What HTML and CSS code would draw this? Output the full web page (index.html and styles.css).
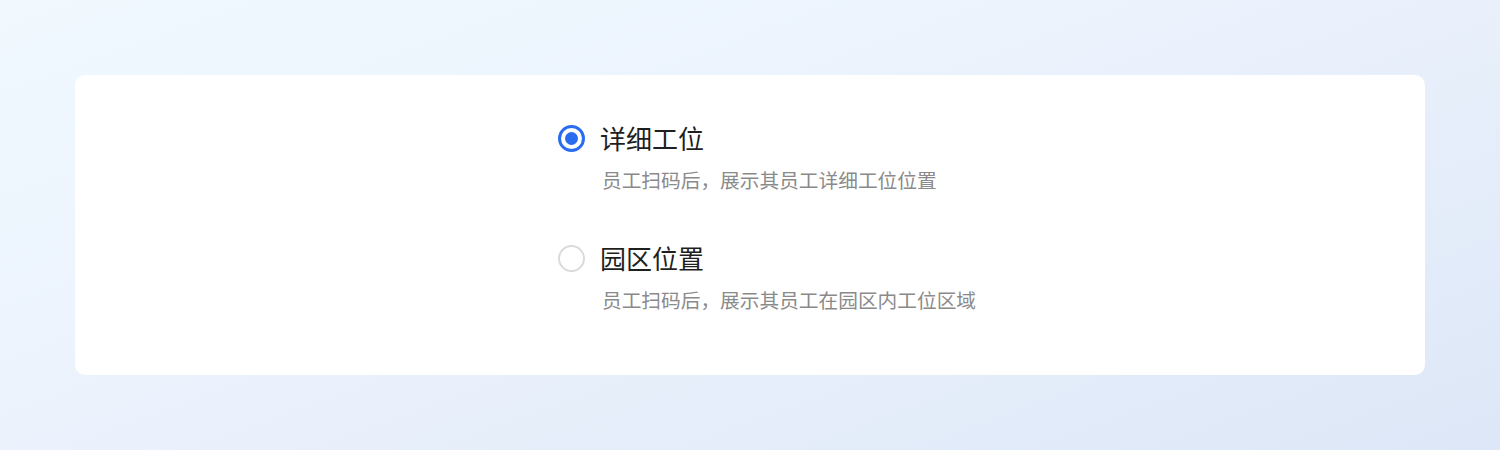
FILE: index.html
```html
<!DOCTYPE html>
<html lang="zh">
<head>
<meta charset="utf-8">
<link rel="stylesheet" href="styles.css">
</head>
<body>
<div class="page">
  <div class="card">
    <div class="options">
      <div class="option">
        <div class="head">
          <span class="radio checked"></span>
          <span class="title">详细工位</span>
        </div>
        <div class="desc">员工扫码后，展示其员工详细工位位置</div>
      </div>
      <div class="option">
        <div class="head">
          <span class="radio"></span>
          <span class="title">园区位置</span>
        </div>
        <div class="desc">员工扫码后，展示其员工在园区内工位区域</div>
      </div>
    </div>
  </div>
</div>
</body>
</html>
```

FILE: styles.css
```css
html, body {
  margin: 0;
  padding: 0;
}
body {
  font-family: "Noto Sans CJK SC", "Noto Sans", sans-serif;
}
.page {
  width: 1500px;
  height: 450px;
  box-sizing: border-box;
  padding: 75px;
  background: linear-gradient(160deg, #f1f9ff 0%, #eaf1fc 50%, #dde7f7 100%);
}
.card {
  height: 300px;
  background: #ffffff;
  border-radius: 10px;
  box-sizing: border-box;
  padding: 40px 0 0 483px;
}
.options {
  display: flex;
  flex-direction: column;
  gap: 41px;
}
.option {
  display: flex;
  flex-direction: column;
}
.head {
  display: flex;
  align-items: center;
  gap: 15px;
  height: 46px;
}
.radio {
  width: 27px;
  height: 27px;
  box-sizing: border-box;
  border-radius: 50%;
  border: 2px solid #dadada;
  background: #fff;
  position: relative;
}
.radio.checked {
  border: 3px solid #2a6cf0;
}
.radio.checked::after {
  content: "";
  position: absolute;
  left: 50%;
  top: 50%;
  width: 13px;
  height: 13px;
  margin: -6.5px 0 0 -6.5px;
  border-radius: 50%;
  background: #2a6cf0;
}
.title {
  font-size: 26px;
  color: #1f1f1f;
  line-height: 46px;
}
.desc {
  margin-left: 44px;
  font-size: 19.7px;
  color: #8a8a8a;
  line-height: 28px;
  margin-top: 5px;
}
```
